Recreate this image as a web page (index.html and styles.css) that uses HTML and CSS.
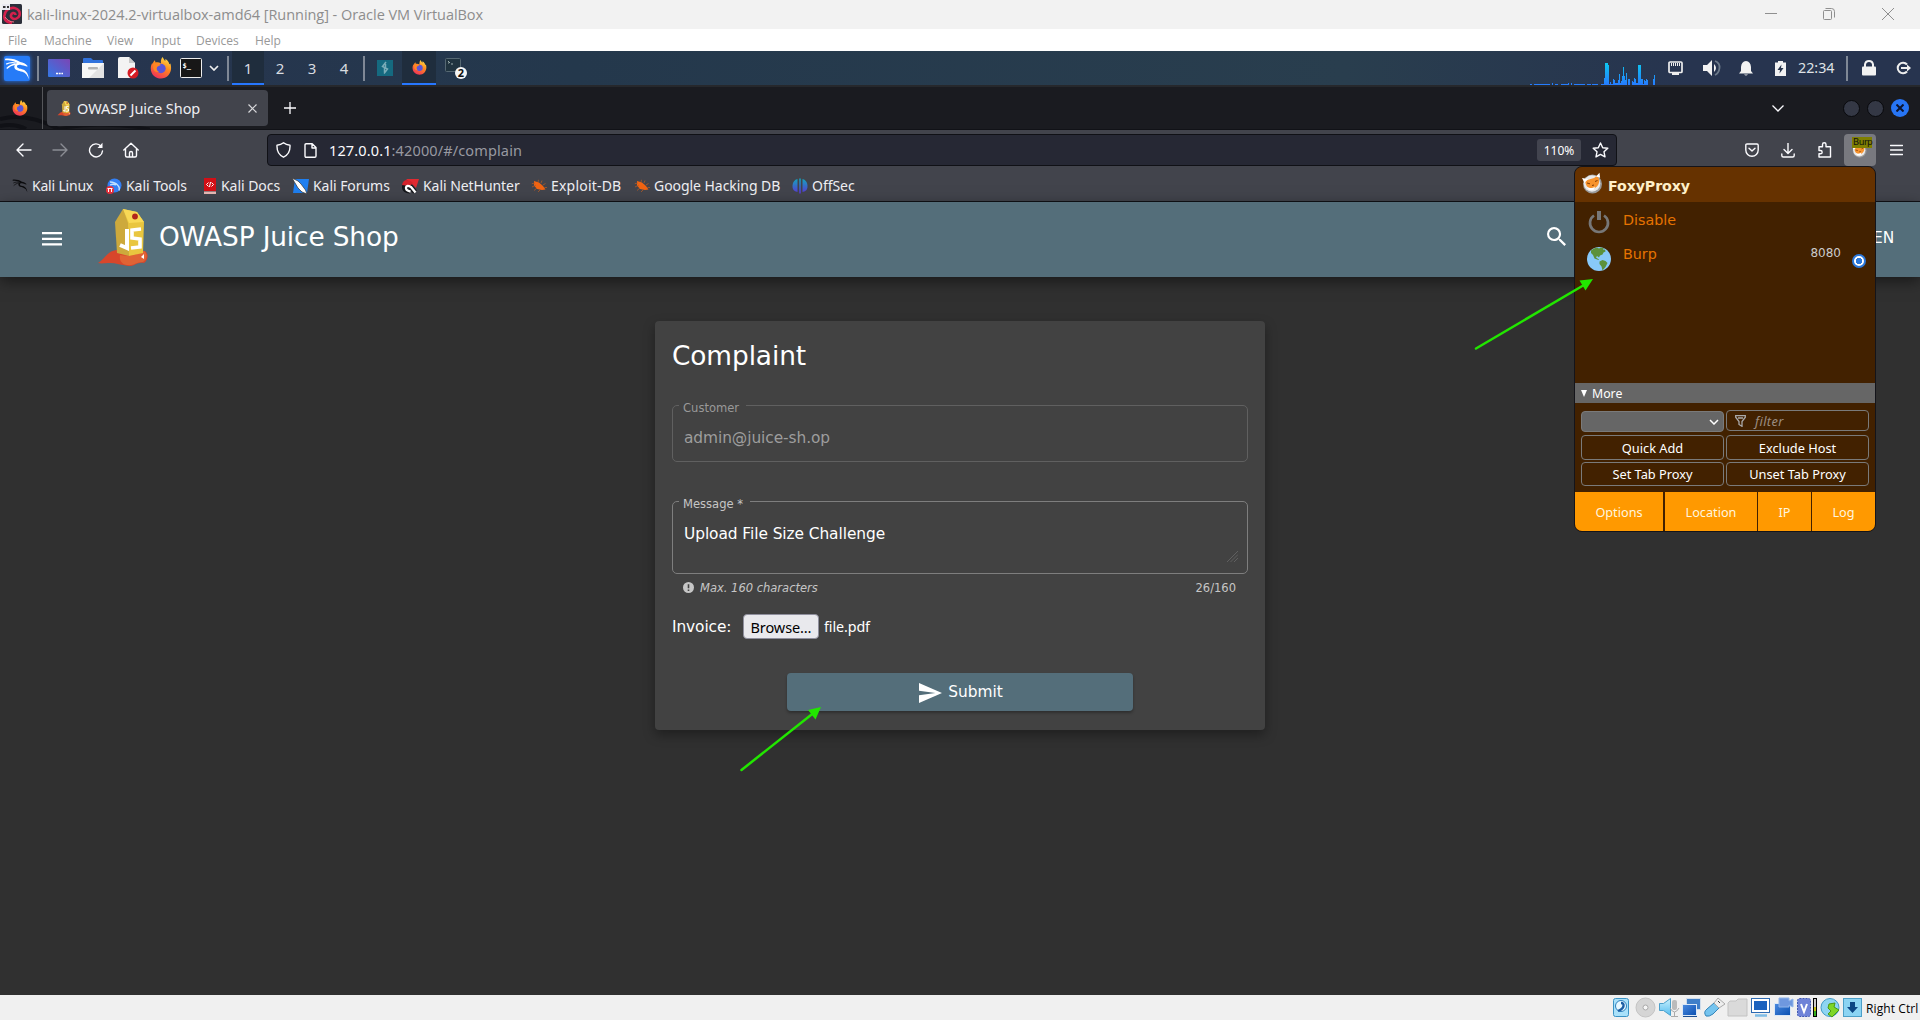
FILE: index.html
```html
<!DOCTYPE html>
<html lang="en">
<head>
<meta charset="utf-8">
<title>OWASP Juice Shop</title>
<link rel="stylesheet" href="styles.css">
</head>
<body>
<svg class="defs" aria-hidden="true">
  <defs>
    <linearGradient id="flame" x1="0.8" y1="0" x2="0.3" y2="1"><stop offset="0" stop-color="#ffe14a"/><stop offset=".45" stop-color="#ff8a1e"/><stop offset="1" stop-color="#f0305a"/></linearGradient>
    <linearGradient id="desk" x1="0" y1="1" x2="1" y2="0"><stop offset="0" stop-color="#3478e5"/><stop offset="1" stop-color="#7b45b5"/></linearGradient>
    <linearGradient id="load" x1="0" y1="0" x2="0" y2="1"><stop offset="0" stop-color="#0dc8f0"/><stop offset="1" stop-color="#2777ff"/></linearGradient>
    <linearGradient id="offsec" x1="0" y1="0" x2="0" y2="1"><stop offset="0" stop-color="#12a5bd"/><stop offset="1" stop-color="#5b35d5"/></linearGradient>
    <linearGradient id="sky" x1="0" y1="0" x2="0" y2="1"><stop offset="0" stop-color="#c9f0fd"/><stop offset="1" stop-color="#55bdf0"/></linearGradient>
    <linearGradient id="navy" x1="0" y1="0" x2="1" y2="1"><stop offset="0" stop-color="#4c8be0"/><stop offset="1" stop-color="#0a4fb0"/></linearGradient>
  </defs>
  <symbol id="firefox" viewBox="0 0 22 22">
    <path d="M12.500 0c1 1.400 1.400 2.700 2.700 4 .3-.7.200-1.300 0-2C18 3.300 19 5.400 19.300 7.200l1.100-.6c1.300 4.400.8 8.500-2 11.600-3.600 4-10 4.400-14.100 1C.6 16.200-.4 10.500 2.300 5.700l.3 1.500c.4-1.600 1.100-2.900 2.300-4l.6 2.300c2-.4 4-.1 5.500 1C10.500 4 11.300 1.800 12.500 0z" fill="url(#flame)"/>
    <circle cx="11" cy="11.500" r="4.700" fill="#5a55d8"/>
    <path d="M3.500 7c2.500-1.300 5-.8 7.400.9-1.500.8-3.100.8-3.900 2.400-1 1.700.1 4 2 4.600-3.500.6-5.700-1.500-5.800-4z" fill="#ff8624"/>
  </symbol>
  <symbol id="dragon" viewBox="0 0 24 24">
    <path d="M1 2.500C6 2 11 3 15 5.500c2.500.5 5 1.500 7 4l-1 .3c-2-1-4-1.300-6-1.800-2-.2-3.300.6-3 2 .3 1.600 3 1.600 5.500 2.500 3.500 1.300 5 4.500 5.500 9-1.500-4-3-6-6-7-3.500-1-7-1.300-7.500-4.200C9.300 8.500 10.500 7 12 6.500 8.500 4.500 5 4 1 4z" fill="currentColor"/>
    <path d="M2 7.500c3-1.500 6-1.700 9-1M2.500 11.500c2-2 4.500-3.500 8-4" fill="none" stroke="currentColor" stroke-width="1.100"/>
  </symbol>
  <symbol id="bug" viewBox="0 0 16 14">
    <path d="M3 2l5 1.500 4 3.500 2.500 3.500-3.500.5-5-1L3 6.500z" fill="#f26412"/>
    <path d="M4 4L.8 4.700M5 6L1 8M6 9l-3 2.500M9 11l-2 2M7 3L7.500.8M10 4l1-2.500M12 6l2.500-1.500M13.500 8.500H16" stroke="#b25a26" stroke-width=".8"/>
  </symbol>
  <symbol id="fox" viewBox="0 0 22 22">
    <circle cx="10.500" cy="12" r="9.500" fill="#9a9a9a"/><circle cx="10" cy="11.500" r="8.300" fill="#e9e9e9"/>
    <path d="M3 9l4-1.500 5-1.500 3.500-2.500 1.400 3.500c.8 4-.9 7.500-3.900 9-4 1.500-8 0-9-3.500z" fill="#f7932d"/>
    <path d="M0 6l6 1-3.500 4zM14 4.500L17.500.8l.6 5zM5 15c3 2 6 1 8-.5l-1 3c-3 1.700-5.500.7-7-2.500z" fill="#fff"/>
    <path d="M5 11l3 .8M13 9.500l2.500-1M10 13.500l2-.5" stroke="#813c05" stroke-width="1"/>
  </symbol>
  <symbol id="carton" viewBox="0 0 50 57">
    <path d="M0 54c7-4 9-12 19-13l28 1c4 3 3 9-1 12-8-1-9 4-16 3-7-1-12-3-18-3-5 0-8 1-12 0z" fill="#d8462b"/>
    <path d="M22 46c10 2 16 0 24-4 4 3 3 9-1 11-7 0-9 4-16 3-5-1-8-4-7-10z" fill="#e06335"/>
    <path d="M17 13L25 0l6 14v33l-12-3z" fill="#cda93c"/><path d="M25 0l14 3 7 10-1 31-14 3-1-33z" fill="#e9c63f"/><path d="M25 0l14 3 7 10-15 1z" fill="#f8d956"/>
    <circle cx="37" cy="7.500" r="2.900" fill="#b3261b"/><path d="M43 48l3-3v5z" fill="#fff"/>
    <path d="M29 20v19l-7-3" fill="none" stroke="#fff" stroke-width="4"/><path d="M43 20l-9 1v8l8 1v8l-9 1" fill="none" stroke="#fff" stroke-width="3.600"/>
  </symbol>
</svg>

<div class="screen">
  <header class="titlebar">
    <svg class="vm-icon" width="20" height="20" viewBox="0 0 20 20"><rect width="20" height="20" rx="1.500" fill="#2c2f3a"/><path d="M10 19c-6-.500-8.500-4-7.500-8C3.500 5.500 8 3.500 12.500 4c4 .8 6 4 5 7.500-1 3-5 4.500-7.500 2.500-2-1.500-1-4.500 1-5 1.500-.2 2.500.6 2.500 2" fill="none" stroke="#d5204c" stroke-width="2.600"/><path d="M3 13c2 3 5 5 9 5" stroke="#ff7088" stroke-width="1" fill="none"/><rect width="8" height="6" fill="#e9e9ef"/><path d="M1 3h2.500M5 3h2" stroke="#333" stroke-width="2"/></svg>
    <span class="title">kali-linux-2024.2-virtualbox-amd64 [Running] - Oracle VM VirtualBox</span>
    <svg class="win-controls" width="130" height="16" viewBox="0 0 130 16" fill="none" stroke="#8f8f8f" stroke-width="1"><path d="M0 7.500h12M117 2l12 12M129 2l-12 12"/><rect x="58.500" y="4.500" width="8" height="9" rx="1"/><path d="M60.500 2.500h6a3 3 0 0 1 3 3v6"/></svg>
  </header>
  <nav class="menubar"><span>File</span><span>Machine</span><span>View</span><span>Input</span><span>Devices</span><span>Help</span></nav>

  <div class="panel">
    <div class="panel-left">
      <span class="kali"><svg width="26" height="26"><use href="#dragon"/></svg></span>
      <i class="sep"></i>
      <svg width="22" height="18" viewBox="0 0 22 18"><rect width="22" height="18" rx="1" fill="url(#desk)"/><path d="M8 14.500h2m.7 0h2m.7 0h1.600" stroke="#fff" stroke-width="1.500"/></svg>
      <svg width="22" height="20" viewBox="0 0 22 20"><path d="M1 6V1q0-1 1-1h7l2 2h9q1 0 1 1v4z" fill="#3172dc"/><rect y="5" width="22" height="15" fill="#f7f7f7"/><path d="M22 5v15H7z" fill="#e3e3e3"/><rect x="6" y="9" width="10" height="2.500" rx="1" fill="#b4b4b4"/></svg>
      <svg width="22" height="22" viewBox="0 0 22 22"><path d="M2 0h9l6 6v15H0V2q0-2 2-2z" fill="#f3f3f3"/><path d="M11 0l6 6h-6z" fill="#c9c9c9"/><circle cx="15" cy="16" r="5.500" fill="#d51c24"/><path d="M12.500 18.500l5-5" stroke="#fff" stroke-width="2"/></svg>
      <svg width="22" height="22"><use href="#firefox"/></svg>
      <svg width="22" height="20" viewBox="0 0 22 20"><rect x=".5" y=".5" width="21" height="19" rx="1" fill="#171717" stroke="#eee"/><text x="2.500" y="9.500" class="term-text">$_</text></svg>
      <svg class="panel-chevron" width="10" height="6" viewBox="0 0 10 6" fill="none" stroke="#eee" stroke-width="1.700"><path d="M1 1l4 4 4-4"/></svg>
      <i class="sep"></i>
      <span class="ws active">1</span><span class="ws">2</span><span class="ws">3</span><span class="ws">4</span>
      <i class="sep"></i>
      <svg width="16" height="16" viewBox="0 0 16 16"><rect width="16" height="16" fill="#156a80"/><path d="M9 2L5.500 6.500l5 2.500L7 13.500M8.500 4v4M7.500 8v4" stroke="#7badb8" stroke-width="1.500" fill="none"/></svg>
      <span class="task"><svg width="15" height="15"><use href="#firefox"/></svg></span>
      <svg class="stack" width="24" height="24" viewBox="0 0 24 24"><rect x=".5" y="1.500" width="15" height="13" rx="1" fill="#20333f" stroke="#566873"/><path d="M3 4l2 2M3 6h1M6 7h2" stroke="#9aa" fill="none"/><circle cx="16" cy="16" r="6" fill="#f6f6f6"/><text x="16" y="20" class="badge-text">2</text></svg>
    </div>
    <div class="panel-right">
      <svg class="graph" width="126" height="23" viewBox="0 0 126 23" shape-rendering="crispEdges"><path d="M0 22h2v1H0zM4 22h16v1H4zM22 21h1v2h-1zM25 22h3v1h-3zM31 22h8v1h-8zM38 21h1v2h-1zM41 21h1v2h-1zM44 22h11v1H44zM57 22h4v1h-4zM62 22h6v1h-6zM71 22h3v-6h1V1h3l1 3v18h1v-2h1v2h2v-5h1v1h1v3h3v-3h1v-6h1v9h1v-2h1v-5h1V5h1v9h1v4h1v-7h1v12h1v-6h2v6h2v-4h1v1h1v-4h1v1h1v4h2V3h3v14h2v5h1v-4h1v1h1v-2h1v1h1v5h5v-6h1v-4h1v10h1v1H71z" fill="url(#load)"/></svg>
      <svg width="15" height="14" viewBox="0 0 15 14"><rect x="1" y="1" width="13" height="10.500" rx="1" fill="none" stroke="#eee" stroke-width="1.700"/><path d="M3.500 2v3M5.500 2v3M7.500 2v3M9.500 2v3M11.500 2v3" stroke="#eee"/><path d="M4 13h7" stroke="#eee" stroke-width="2"/></svg>
      <svg width="18" height="16" viewBox="0 0 18 16"><path d="M0 5h4l5-5v16l-5-5H0z" fill="#f2f2f2"/><path d="M11 4q4 4 0 8" fill="#f2f2f2"/><path d="M12 1q5 2 4.500 7T12 15" fill="none" stroke="#6d7a8a" stroke-width="1.800"/></svg>
      <svg width="14" height="15" viewBox="0 0 14 15"><path d="M7 0q4.500.5 5 6v4l2 2.500H0L2 10V6q.5-5.500 5-6zM5 13.500h4q-2 2-4 0z" fill="#f2f2f2"/></svg>
      <svg width="11" height="15" viewBox="0 0 11 15"><path d="M3 0h5v1.500h3V15H0V1.500h3z" fill="#f2f2f2"/><path d="M6.500 3.500L2.500 9h2.500l-.5 3.500L8.500 7H6z" fill="#27344c"/></svg>
      <span class="clock">22:34</span>
      <i class="sep"></i>
      <svg width="14" height="16" viewBox="0 0 14 16"><rect y="6.500" width="14" height="9" rx="1" fill="#f2f2f2"/><path d="M3 7V4.500Q3.500 1 7 1t4 3.500V7" fill="none" stroke="#f2f2f2" stroke-width="2"/></svg>
      <svg width="15" height="14" viewBox="0 0 15 14"><path d="M11 3.500A5.300 5.300 0 1 0 11 10.500" fill="none" stroke="#eee" stroke-width="2"/><path d="M5 7h7" stroke="#eee" stroke-width="2"/><path d="M11 3.500L15 7l-4 3.500z" fill="#eee"/></svg>
    </div>
  </div>

  <div class="tabstrip">
    <svg class="swirl" width="150" height="42" viewBox="0 0 150 42" fill="none" stroke="#101116" stroke-width="4"><path d="M0 32q28-7 58 10M0 39q14-3 26 3"/><path d="M58 42q40-8 92 0" stroke-width="3"/></svg>
    <span class="home-tab"><svg width="16" height="16"><use href="#firefox"/></svg></span>
    <div class="tab"><svg width="14" height="15"><use href="#carton"/></svg><span class="tab-title">OWASP Juice Shop</span><svg width="9" height="9" viewBox="0 0 9 9" stroke="#d9d9dc" stroke-width="1.200"><path d="M.5.5l8 8M8.500.5l-8 8"/></svg></div>
    <svg class="plus" width="12" height="12" viewBox="0 0 12 12" stroke="#fbfbfe" stroke-width="1.300"><path d="M0 6h12M6 0v12"/></svg>
    <div class="window-buttons">
      <svg width="12" height="7" viewBox="0 0 12 7" fill="none" stroke="#fbfbfe" stroke-width="1.300"><path d="M.5.5l5.500 5.500 5.500-5.500"/></svg>
      <i class="dot"></i><i class="dot"></i><i class="dot close"><svg width="8" height="8" viewBox="0 0 8 8" stroke="#0c1530" stroke-width="2"><path d="M.5.500l7 7M7.500.500l-7 7"/></svg></i>
    </div>
  </div>

  <div class="toolbar">
    <div class="nav-buttons">
      <svg width="16" height="16" viewBox="0 0 16 16" class="ln"><path d="M15 8H1.500M7 2L1 8l6 6"/></svg>
      <svg width="16" height="16" viewBox="0 0 16 16" class="ln off"><path d="M1 8h13.500M9 2l6 6-6 6"/></svg>
      <svg width="16" height="16" viewBox="0 0 16 16" class="ln"><path d="M13 4.200A6.500 6.500 0 1 0 14.500 9"/><path d="M14.500.8V6H9.500z" fill="#fbfbfe" stroke="none"/></svg>
      <svg width="16" height="16" viewBox="0 0 16 16" class="ln"><path d="M.8 8L8 1.200 15.200 8M2.500 7v6.500q0 1.500 1.500 1.500h8q1.500 0 1.500-1.500V7M6.500 15v-4q0-1.500 1.500-1.500t1.500 1.500v4"/></svg>
    </div>
    <div class="urlbar">
      <svg width="15" height="16" viewBox="0 0 15 16" class="ln"><path d="M7.500.8Q10 3 14 3.200 14.500 12 7.500 15.200.5 12 1 3.200 5 3 7.500.8z"/></svg>
      <svg width="13" height="15" viewBox="0 0 13 15" class="ln"><path d="M1 2q0-1.200 1.200-1.200h6L12 4.600V13q0 1.200-1.200 1.200H2.200Q1 14.200 1 13zM8 1v4h4"/></svg>
      <span class="url"><b>127.0.0.1</b>:42000/#/complain</span>
      <span class="zoom">110%</span>
      <svg width="17" height="16" viewBox="0 0 17 16" class="ln"><path d="M8.500 1l2.200 4.700 5.100.6-3.800 3.500 1 5.100-4.500-2.500L4 14.900l1-5.100L1.200 6.300l5.100-.6z"/></svg>
    </div>
    <div class="actions">
      <svg width="14" height="14" viewBox="0 0 14 14" class="ln"><path d="M2 1h10q1.200 0 1.200 1.200V7a6.200 6.200 0 0 1-12.400 0V2.200Q.8 1 2 1zM4 5.200l3 2.900 3-2.900"/></svg>
      <svg width="14" height="15" viewBox="0 0 14 15" class="ln"><path d="M7 0v10M3 6.500l4 4 4-4M.8 11v1.500q0 1.500 1.500 1.500h9.400q1.500 0 1.500-1.500V11"/></svg>
      <svg width="15" height="16" viewBox="0 0 15 16" class="ln"><path d="M2 4.800h3.500V2.500a1.700 1.700 0 0 1 3.500 0v2.300h4.500V15H2v-3.200h1.500a1.600 1.600 0 0 0 0-3.300H2z"/></svg>
      <span class="ext"><svg width="16" height="16"><use href="#fox"/></svg><em>Burp</em></span>
      <svg width="13" height="12" viewBox="0 0 13 12" class="ln"><path d="M.5 1.500h12M.5 6h12M.5 10.500h12"/></svg>
    </div>
  </div>

  <div class="bookmarks">
    <a class="k"><svg width="16" height="16"><use href="#dragon"/></svg><span>Kali Linux</span></a>
    <a><svg width="16" height="16" viewBox="0 0 16 16"><circle cx="8.500" cy="7.500" r="7" fill="#3380f5"/><path d="M4 4q5 0 8 3.500 2 2 1 5M4 7q3-1.500 6 0" stroke="#bfe0ff" fill="none" stroke-width="1.300"/><circle cx="4" cy="12" r="4" fill="#e8303b"/><path d="M2.500 10.500v3.500M5.500 10.500v3.500M1.500 10.500h5" stroke="#fff"/></svg><span>Kali Tools</span></a>
    <a><svg width="14" height="16" viewBox="0 0 14 16"><path d="M1 0h12v13H1z" fill="#d20f16"/><path d="M1 13.500h12V16H1z" fill="#e8b9b5"/><path d="M5.500 4.500l-2 2 2 2M8.500 4.500l2 2-2 2M7.500 4l-1 5" stroke="#fff" fill="none"/></svg><span>Kali Docs</span></a>
    <a><svg width="17" height="16" viewBox="0 0 17 16"><path d="M3 1h14l-2 14H1z" fill="#1f7ff0"/><path d="M0 0l3 5 3 5 4 4 5 2-1.500-4L9 6 6 3z" fill="#fff" stroke="#333" stroke-width=".7"/></svg><span>Kali Forums</span></a>
    <a><svg width="17" height="16" viewBox="0 0 17 16"><path d="M4 1h13l-3 9-3-3z" fill="#e12a31"/><path d="M13 14L8 8Q3 4 2.500 8.500T8 13" fill="none" stroke="#15161a" stroke-width="5"/><path d="M0 7q1-5 5-5 4 .5 6 3l-3 3z" fill="#d3222b"/><path d="M13.500 14.500L9 9Q4.500 6.500 4 9.500t4.500 4" fill="none" stroke="#fff" stroke-width="2.300"/></svg><span>Kali NetHunter</span></a>
    <a class="wide"><svg width="16" height="14"><use href="#bug"/></svg><span>Exploit-DB</span></a>
    <a><svg width="16" height="14"><use href="#bug"/></svg><span>Google Hacking DB</span></a>
    <a><svg width="16" height="16" viewBox="0 0 16 16"><path d="M5.500 1v13Q0 13 .5 7.500T5.500 1zM7.200.500h1.600v15H7.200zM10.500 1v13q5.500-1 5-6.500T10.500 1z" fill="url(#offsec)"/></svg><span>OffSec</span></a>
  </div>

  <header class="shop-header">
    <svg class="hamburger" width="20" height="14" viewBox="0 0 20 14" fill="#fff"><path d="M0 0h20v2.200H0zM0 5.700h20V8H0zM0 11.300h20v2.200H0z"/></svg>
    <svg class="logo" width="50" height="57"><use href="#carton"/></svg>
    <h1>OWASP Juice Shop</h1>
    <svg class="search" width="19" height="19" viewBox="3 3 17.500 17.500"><path fill="#fff" d="M15.500 14h-.79l-.28-.27A6.470 6.470 0 0 0 16 9.500 6.500 6.500 0 1 0 9.500 16c1.610 0 3.090-.59 4.230-1.570l.27.28v.79l5 4.990L20.490 19l-4.990-5zm-6 0C7.010 14 5 11.990 5 9.500S7.010 5 9.500 5 14 7.010 14 9.500 11.990 14 9.500 14z"/></svg>
    <span class="lang">EN</span>
  </header>

  <main class="page">
    <section class="card">
      <h2>Complaint</h2>
      <div class="field disabled"><label>Customer</label><span class="value">admin@juice-sh.op</span></div>
      <div class="field message"><label>Message *</label><span class="value">Upload File Size Challenge</span>
        <svg class="grip" width="11" height="11" viewBox="0 0 11 11" stroke="#686868" stroke-width=".8"><path d="M0 11L11 0M3.500 11L11 3.500M7 11l4-4"/></svg></div>
      <div class="hint"><svg width="11" height="11" viewBox="0 0 11 11"><circle cx="5.500" cy="5.500" r="5.500" fill="#c6c6c6"/><path d="M5.500 2.200v4M5.500 7.400v1.500" stroke="#424242" stroke-width="1.600"/></svg><i>Max. 160 characters</i><span>26/160</span></div>
      <div class="invoice"><label>Invoice:</label><span class="browse">Browse…</span><span class="fname">file.pdf</span></div>
      <button class="submit"><svg width="23" height="20" viewBox="0 0 23 20"><path d="M0 20l23-10L0 0v7.700L16.500 10 0 12.300z" fill="#fff"/></svg><span>Submit</span></button>
    </section>
  </main>

  <footer class="statusbar">
    <svg width="249" height="22" viewBox="0 0 249 22">
      <rect x=".5" y="1.500" width="15" height="18" rx="2" fill="#a9e1fa" stroke="#3a93c5"/><circle cx="8" cy="9" r="5.500" fill="#e8f8ff" stroke="#2c7fbd"/><path d="M8 6q3 0 2.500 3T5 14" stroke="#1c5ea5" fill="none" stroke-width="2.400"/>
      <circle cx="32.500" cy="10.500" r="9.500" fill="#d5d5d5" stroke="#c4c4c4"/><circle cx="32.500" cy="10.500" r="2.500" fill="#f5f5f5" stroke="#aaa"/>
      <path d="M46.500 6.500h4l7-5v17l-7-5h-4z" fill="url(#sky)" stroke="#4b9fcb"/><rect x="59" y="3" width="5" height="10" rx="2" fill="#bbb"/><path d="M57 11q4.500 8 9 0M61.500 15v4M58 19.500h7" stroke="#aaa" fill="none"/>
      <rect x="73.500" y="1.500" width="14" height="11" fill="#3f7fc9" stroke="#cfdceb"/><rect x="69.500" y="7.500" width="14" height="11" fill="url(#navy)" stroke="#dbe8f7"/><path d="M70 19.500h14" stroke="#1c4e91"/>
      <path d="M93 19q-3-4 1-7l7-6 5 5-6 6q-4 3-7 2z" fill="#75c4ef" stroke="#3384b8"/><path d="M101 6l4-5 7 6-6 4z" fill="#eee" stroke="#aaa"/><path d="M105 4l2 2" stroke="#444"/>
      <path d="M115 6l2-2h6l2-2h9v17h-19z" fill="#dadada" stroke="#c2c2c2"/>
      <rect x="138.500" y="1.500" width="18" height="14" fill="#fff" stroke="#2d6ab2"/><rect x="141" y="4" width="13" height="9" fill="#1b62be"/><path d="M142 18.500h12" stroke="#7fbce6" stroke-width="2.500"/>
      <rect x="161.500" y="6.500" width="16" height="12" fill="url(#navy)" stroke="#dbe8f7"/><path d="M166 1h10v3l4-2v8l-4-2v2h-10z" fill="#6f98df" stroke="#90b5eb"/>
      <rect x="184.500" y="1.500" width="13" height="18" rx="2" fill="#6f83d8" stroke="#4059b5" stroke-dasharray="2 1"/><path d="M188 7l3 8 3-8" stroke="#fff" fill="none" stroke-width="2"/>
      <path d="M200 1h4v19h-4z" fill="#000"/><path d="M201.200 2h1.600v8h-1.600z" fill="#fff"/><path d="M201.200 10h1.600v4h-1.600z" fill="#f3ef1b"/><path d="M201.200 14h1.600v5h-1.600z" fill="#42d926"/>
      <circle cx="217" cy="10.500" r="9" fill="#8ed5f2" stroke="#409bc7"/><path d="M216 7l6-1-1 4 5 3-7 7-4-3 3-3-3-3z" fill="#7ed627" stroke="#4b9913"/>
      <rect x="230.500" y="1.500" width="18" height="18" fill="#8cd4f3" stroke="#4c9fc8"/><path d="M237 5h5v5h3l-5.500 6-5.500-6h3z" fill="#0c4684"/>
    </svg>
    <span>Right Ctrl</span>
  </footer>

  <aside class="popup">
    <h3><svg width="22" height="22"><use href="#fox"/></svg><span>FoxyProxy</span></h3>
    <ul>
      <li><svg class="power" width="22" height="24" viewBox="0 0 22 24" fill="none" stroke="#777"><path d="M6 5.500a9 9 0 1 0 10 0" stroke-width="2.700"/><path d="M11 1v9" stroke-width="4"/></svg><span>Disable</span></li>
      <li><svg width="24" height="24" viewBox="0 0 24 24"><circle cx="12" cy="12" r="12" fill="#88c9f9"/><path d="M4 3.500Q7 1 10 .5l2 1 2-1 3 1-1 1.500 2-.5.500 2-2 1-1 2-2.500 1-1 2-2-1.500-1 1.500 3 2-.5.500-4-1.500L6 8 4 6z" fill="#5c913b"/><path d="M12.500 14.500l3-1.500 3 1 2 2-2 4-3 3.500-1-4-2-2.500z" fill="#5c913b"/></svg><span>Burp</span><small>8080</small><i class="radio"></i></li>
    </ul>
    <div class="more"><svg width="6" height="7" viewBox="0 0 6 7"><path d="M0 0h6L3 7z" fill="#fff"/></svg><span>More</span></div>
    <div class="tools">
      <div class="select"><svg width="10" height="6" viewBox="0 0 10 6" fill="none" stroke="#fff" stroke-width="1.500"><path d="M1 1l4 4 4-4"/></svg></div>
      <div class="filter"><svg width="11" height="12" viewBox="0 0 11 12" fill="none" stroke="#aaa" stroke-width="1.300"><path d="M.700.700h9.600v1.500L7 6.500v4.800L4 9.500v-3L.7 2.200zM3 3h5"/></svg><span>filter</span></div>
      <button>Quick Add</button><button>Exclude Host</button>
      <button>Set Tab Proxy</button><button>Unset Tab Proxy</button>
    </div>
    <div class="links"><a>Options</a><a>Location</a><a>IP</a><a>Log</a></div>
  </aside>

  <svg class="arrows" width="1920" height="1020" viewBox="0 0 1920 1020">
    <g stroke="#22e600" stroke-width="2.500" stroke-linecap="round"><path d="M1476 348.500L1584 285M741.500 770l72-57"/></g>
    <path d="M1593 279l-13.500 1.500 6 10zM821 707l-13 3 7.500 9.500z" fill="#22e600"/>
  </svg>
</div>
</body>
</html>
```
FILE: styles.css
```css
* { box-sizing: border-box; }
body { margin: 0; overflow: hidden; background: #303030; color: #fff; font-family: "Noto Sans", "Open Sans", sans-serif; }
h1, h2, h3, ul { margin: 0; padding: 0; font-weight: 400; }
svg { display: block; flex: none; }
span, h1, h2, i, a, label, button { white-space: nowrap; }
.defs { position: absolute; width: 0; height: 0; }
.screen { position: relative; display: flex; flex-direction: column; width: 1920px; height: 1020px; overflow: hidden; }

.titlebar { display: flex; align-items: center; height: 29px; padding: 0 25px 1px 2px; background: #f2f2f2; color: #8d8d8d; }
.title { margin-left: 5px; font: 14.500px "Open Sans", sans-serif; letter-spacing: -.04px; }
.win-controls { margin-left: auto; }
.menubar { display: grid; grid-template-columns: 36px 63px 44px 45px 59px auto; align-items: center; height: 22px; padding-left: 8px; background: #fff; color: #999; font: 12px "Open Sans", sans-serif; }

.panel { display: flex; justify-content: space-between; height: 34px; background: linear-gradient(90deg, #27344f 0, #24384c 30%, #293e4e 70%, #27344f 88%); }
.panel-left { display: grid; grid-template-columns: 33px 11px 34px 36px 32px 30px 30px 17px 5px 32px 32px 32px 35px 14px 25px 43px auto; align-items: center; padding-left: 4px; }
.kali { display: flex; width: 26px; height: 25px; border-radius: 2px; background: #267bf7; box-shadow: 0 0 4px #267bf7; }
.sep { width: 2px; height: 25px; background: #7f8896; }
.panel-chevron { margin-left: -1px; }
.stack { margin-top: 2px; }
.ws { display: flex; align-items: center; justify-content: center; width: 32px; height: 34px; color: #d9dce0; font-size: 15px; }
.active, .task { border-bottom: 2px solid #2777ff; background: #1f2d3d; }
.active { padding-top: 1px; }
.task { display: flex; align-items: center; justify-content: center; width: 34px; height: 34px; }
.term-text { fill: #fff; font: bold 7px "DejaVu Sans Mono", monospace; }
.badge-text { fill: #111; font: bold 11px "Noto Sans", sans-serif; text-anchor: middle; }
.panel-right { display: grid; grid-template-columns: 138px 35px 36px 36px 23px 48px 16px 34px 24px; align-items: center; }
.graph { align-self: end; }
.clock { padding-bottom: 1px; color: #dfe2e6; font-size: 14.300px; }

.tabstrip { position: relative; display: flex; align-items: center; height: 45px; border-top: 2px solid #26282c; border-bottom: 1px solid #111217; background: #1a1b20; }
.swirl { position: absolute; left: 0; top: 0; }
.home-tab { position: relative; display: flex; align-items: center; width: 43px; height: 42px; padding-left: 12px; border-right: 1px solid #55565a; }
.tab { position: relative; display: flex; align-items: center; width: 221px; height: 36px; margin-left: 4px; padding: 0 11px 0 10px; border-radius: 4px; background: #42444c; color: #eeeef2; }
.tab-title { margin-left: 6px; margin-right: auto; padding-bottom: 1px; font-size: 14.500px; letter-spacing: -.05px; }
.plus { margin-left: 16px; }
.window-buttons { display: grid; grid-template-columns: 71px 24px 24px 20px; align-items: center; margin-left: auto; padding-right: 9px; }
.dot { display: flex; align-items: center; justify-content: center; width: 17px; height: 17px; border: 1px solid #08090c; border-radius: 50%; background: #343845; }
.dot.close { width: 18px; height: 18px; border: 0; background: #2775f5; }

.toolbar { display: flex; align-items: center; height: 40px; background: #42444c; }
.nav-buttons { display: grid; grid-template-columns: 36px 36px 35px 16px; padding-left: 16px; width: 267px; }
.ln { fill: none; stroke: #fbfbfe; stroke-width: 1.400; stroke-linecap: round; stroke-linejoin: round; }
.off { stroke: #8b8d94; }
.urlbar { display: flex; align-items: center; width: 1350px; height: 32px; padding: 0 7px 0 8px; border: 1px solid #101116; border-radius: 4px; background: #262834; }
.urlbar svg + svg { margin-left: 13px; }
.url { margin-left: 12px; margin-right: auto; color: #9899a1; font-size: 14.500px; letter-spacing: .13px; }
.url b { color: #fbfbfe; font-weight: 400; }
.zoom { display: flex; align-items: center; justify-content: center; width: 44px; height: 22px; margin-right: 11px; border-radius: 3px; background: #42444f; font-size: 12px; }
.actions { display: grid; grid-template-columns: 36px 36px 27px 46px 13px; align-items: center; margin-left: 128px; }
.ext { position: relative; display: flex; align-items: center; justify-content: center; width: 32px; height: 32px; border-radius: 4px; background: #78797f; }
.ext em { position: absolute; left: 8px; top: 3px; width: 20px; height: 11px; padding-left: 1px; background: #7f7f00; color: #111; font: 9px/11px "DejaVu Sans", sans-serif; letter-spacing: -.5px; }
.bookmarks { display: grid; grid-template-columns: 94px 97px 89px 110px 129px 103px 158px auto; height: 32px; padding-left: 12px; border-bottom: 1px solid #111217; background: #42444c; color: #eeeef2; font-size: 14px; letter-spacing: -.05px; }
.bookmarks a { display: flex; align-items: center; gap: 4px; }
.bookmarks .wide { letter-spacing: .2px; }
.k { letter-spacing: -.2px; }
.k svg { color: #0b0b0d; }

.shop-header { position: relative; z-index: 1; display: flex; align-items: center; height: 75px; padding-left: 42px; background: #546e7a; box-shadow: 0 4px 14px rgba(0,0,0,.5); font-family: "DejaVu Sans", sans-serif; }
.hamburger { margin-top: -2px; }
.shop-header .logo { margin: -5px 11px 0 36px; }
.shop-header h1 { margin-top: -6px; font-size: 26.400px; letter-spacing: -.15px; }
.search { margin: -6px 0 0 auto; }
.lang { width: 22px; margin: -4px 25px 0 307px; font-size: 15.400px; }

.page { flex: 1; display: flex; justify-content: center; align-items: flex-start; padding-top: 44px; font-family: "DejaVu Sans", sans-serif; }
.card { display: flex; flex-direction: column; width: 610px; height: 409px; padding: 19px 17px; border-radius: 4px; background: #424242; box-shadow: 0 5px 12px rgba(0,0,0,.35); }
.card h2 { height: 32px; line-height: 32px; font-size: 26.400px; letter-spacing: -.1px; }
.field { position: relative; height: 57px; margin-top: 33px; padding: 21px 10px 0 11px; border: 1px solid #7e7e7e; border-radius: 5px; }
.disabled { border-color: #606060; color: #9d9d9d; }
.field label { position: absolute; left: 6px; top: -6px; padding: 0 7px 0 4px; background: #424242; color: #c6c6c6; font-size: 11.550px; line-height: 16px; }
.disabled label { color: #999; }
.field .value { display: block; font-size: 15.400px; line-height: 22px; letter-spacing: -.07px; }
.message { height: 74px; margin-top: 39px; }
.grip { position: absolute; right: 9px; bottom: 11px; }
.hint { display: flex; align-items: center; height: 14px; margin: 7px 12px 0 11px; color: #c6c6c6; font-size: 11.500px; }
.hint i { margin-left: 6px; margin-right: auto; }
.invoice { display: flex; align-items: center; height: 26px; margin-top: 19px; font-size: 15.400px; letter-spacing: -.1px; }
.invoice label { width: 71px; padding-top: 1px; }
.browse { display: flex; align-items: center; justify-content: center; width: 76px; height: 25px; margin-right: 5px; border: 1px solid #8f8f9d; border-radius: 4px; background: #e9e9ed; color: #000; font: 14.500px "Noto Sans", sans-serif; }
.fname { font: 14.300px "Noto Sans", sans-serif; }
.submit { display: flex; align-items: center; justify-content: center; gap: 6px; align-self: center; width: 346px; height: 39px; margin-top: 33px; padding: 0 0 0 2px; border: 0; border-radius: 4px; background: #546e7a; box-shadow: 0 2px 3px rgba(0,0,0,.3); color: #fff; font: 15.400px "DejaVu Sans", sans-serif; }
.submit svg { margin-top: 2px; }

.statusbar { display: flex; align-items: center; gap: 4px; height: 25px; padding: 1px 0 0 1613px; background: #f0f0f0; color: #000; font: 12px "Open Sans", sans-serif; letter-spacing: .1px; }

.popup { position: absolute; z-index: 2; left: 1574px; top: 166px; width: 302px; height: 366px; border: 1px solid #14141a; border-radius: 8px; overflow: hidden; background: #422100; display: flex; flex-direction: column; font-family: "DejaVu Sans", sans-serif; }
.popup h3 { display: flex; align-items: center; gap: 4px; height: 35px; padding-left: 7px; background: #663200; color: #ffefc8; font-size: 14.200px; font-weight: 700; letter-spacing: -.1px; }
.popup h3 svg { margin-top: -3px; }
.popup h3 span { padding-top: 2px; }
.popup ul { flex: 1; padding-top: 6px; list-style: none; color: #e67300; font-size: 14.300px; }
.popup li { display: flex; height: 34px; padding-left: 12px; }
.popup li svg { margin-top: 5px; width: 24px; }
.popup li .power { margin-top: 2px; }
.popup li span { margin-left: 12px; line-height: 24px; }
.popup small { margin-left: auto; margin-right: 11px; color: #ccc; font-size: 12px; line-height: 23px; }
.radio { width: 14px; height: 14px; margin: 12px 9px 0 0; border: 2px solid #2b78db; border-radius: 50%; background: radial-gradient(circle, #2b78db 0 3px, #fff 3.500px); }
.more { display: flex; align-items: center; gap: 5px; height: 20px; padding-left: 6px; background: #666; font: 12.300px "Noto Sans", sans-serif; }
.more svg { margin-top: 1px; }
.tools { display: grid; grid-template-columns: 143px 143px; grid-template-rows: 23px 25px 24px; gap: 2px; padding: 7px 6px 6px; }
.tools > * { display: flex; align-items: center; justify-content: center; padding: 0; border: 1px solid #7a7a7a; border-radius: 4px; background: none; color: #fff; font: 12.800px "Noto Sans", sans-serif; }
.tools .select { justify-content: flex-end; height: 21px; margin-top: 1px; padding-right: 4px; background: #666; }
.tools .filter { justify-content: flex-start; gap: 9px; height: 21px; padding-left: 8px; color: #9b8d80; font-style: italic; letter-spacing: .4px; }
.links { display: grid; grid-template-columns: 88px 92px 53px 63px; gap: 0 1px; height: 39px; background: #422100; font: 12.700px "Noto Sans", sans-serif; }
.links a { display: flex; align-items: center; justify-content: center; background: #f90; color: #fff5df; }
.links a:nth-child(n+2) { margin-left: 1px; margin-right: -1px; }
.arrows { position: absolute; left: 0; top: 0; z-index: 3; }
```
